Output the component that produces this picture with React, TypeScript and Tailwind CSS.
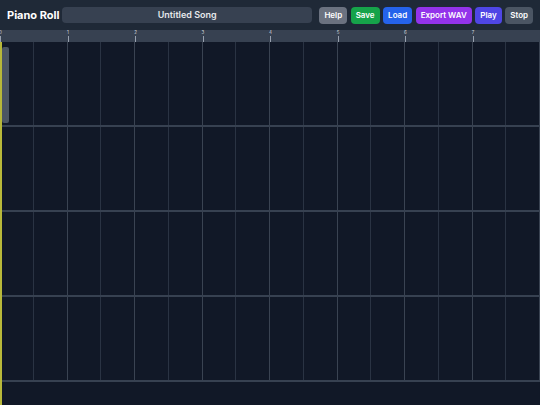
import React from "react";

const buttons = [
  { label: "Help", cls: "bg-[#6b7280]" },
  { label: "Save", cls: "bg-[#16a34a]" },
  { label: "Load", cls: "bg-[#2563eb]" },
  { label: "Export WAV", cls: "bg-[#9333ea]" },
  { label: "Play", cls: "bg-[#4f46e5]" },
  { label: "Stop", cls: "bg-[#4b5563]" },
];

export default function App() {
  const bars = [0, 1, 2, 3, 4, 5, 6, 7];
  const rows = [0, 1, 2, 3];
  const cols = Array.from({ length: 16 }, (_, i) => i);
  return (
    <div
      className="w-[540px] h-[405px] overflow-hidden flex flex-col bg-[#111827] text-white"
      style={{ fontFamily: "Inter, 'Liberation Sans', sans-serif" }}
    >
      <div className="h-[30px] bg-[#1f2937] flex items-center pl-[7px] pr-[7px] gap-[7px] shrink-0">
        <div className="text-[11px] font-bold leading-none w-[48px] whitespace-nowrap">Piano Roll</div>
        <div className="flex-1 h-[16px] rounded bg-[#374151] flex items-center justify-center text-[9px] font-semibold text-gray-200">
          Untitled Song
        </div>
        <div className="flex gap-[3.5px]">
          {buttons.map((b) => (
            <div
              key={b.label}
              className={`${b.cls} h-[17px] px-[5px] rounded flex items-center text-[8px] font-semibold text-white whitespace-nowrap`}
            >
              {b.label}
            </div>
          ))}
        </div>
      </div>
      <div className="h-[12px] bg-[#374151] flex shrink-0">
        {bars.map((b) => (
          <div key={b} className="w-[67.5px] relative">
            <div className="absolute left-[-2px] top-[1px] w-[5px] text-center text-[4.5px] leading-none text-gray-300">
              {b}
            </div>
            <div className="absolute left-0 top-[6px] bottom-0 w-px bg-gray-400" />
          </div>
        ))}
      </div>
      <div className="relative flex-1 flex flex-col">
        {rows.map((r) => (
          <div key={r} className="h-[85px] border-b-2 border-[#374151] grid grid-cols-16">
            {cols.map((c) => (
              <div
                key={c}
                className={c % 2 === 1 ? "border-r border-[#3a4352]" : "border-r border-[#2a3343]"}
              />
            ))}
          </div>
        ))}
        <div className="absolute left-[2px] top-[5px] w-[7px] h-[76px] rounded-[2px] bg-[#4b5563]" />
        <div className="absolute left-0 top-0 bottom-0 w-[2px] bg-[#b8b83a]" />
      </div>
    </div>
  );
}
